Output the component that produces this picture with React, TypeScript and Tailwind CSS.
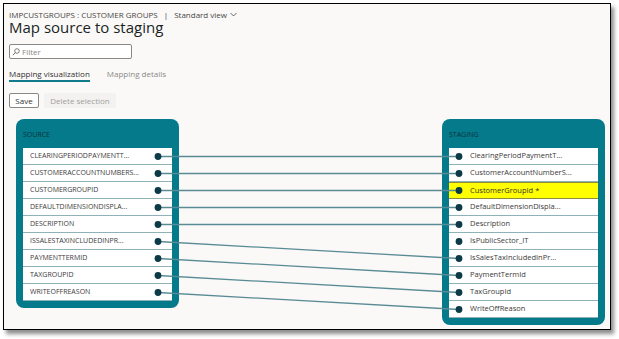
import React from "react";

const SRC = [
  "CLEARINGPERIODPAYMENTT...",
  "CUSTOMERACCOUNTNUMBERS...",
  "CUSTOMERGROUPID",
  "DEFAULTDIMENSIONDISPLA...",
  "DESCRIPTION",
  "ISSALESTAXINCLUDEDINPR...",
  "PAYMENTTERMID",
  "TAXGROUPID",
  "WRITEOFFREASON",
];
const STG = [
  "ClearingPeriodPaymentT...",
  "CustomerAccountNumberS...",
  "CustomerGroupId *",
  "DefaultDimensionDispla...",
  "Description",
  "IsPublicSector_IT",
  "IsSalesTaxIncludedInPr...",
  "PaymentTermId",
  "TaxGroupId",
  "WriteOffReason",
];
const MAP = [0, 1, 2, 3, 4, 6, 7, 8, 9];

const SX = 149;
const TX = 450;
const rowY = (i: number) => 37.5 + 17 * i;

export default function App() {
  return (
    <div className="w-[619px] h-[339px] bg-white overflow-hidden font-['Open_Sans',sans-serif]">
      <div className="ml-[3px] mt-[3px] w-[608px] h-[327px] border border-black bg-[#faf9f8] shadow-[3px_4px_4px_rgba(0,0,0,0.45)] px-[5px] flex flex-col">
        {/* breadcrumb */}
        <div className="mt-[6px] h-[9px] flex items-center text-[8px] leading-[9px] text-[#484644] whitespace-nowrap">
          <span>IMPCUSTGROUPS : CUSTOMER GROUPS</span>
          <span className="ml-[6px] text-[#323130]">|</span>
          <span className="ml-[6px]">Standard view</span>
          <svg width="7" height="5" viewBox="0 0 7 5" className="ml-[3px]">
            <path d="M0.5 1 L3.5 4 L6.5 1" fill="none" stroke="#484644" strokeWidth="0.8" />
          </svg>
        </div>
        {/* title */}
        <div className="h-[16px] text-[15px] leading-[16px] text-[#201f1e] whitespace-nowrap">
          Map source to staging
        </div>
        {/* filter */}
        <div className="mt-[9px] h-[15px] w-[123px] border border-[#8a8886] rounded-[2px] bg-white flex items-center pl-[2px]">
          <svg width="8" height="8" viewBox="0 0 8 8">
            <circle cx="5" cy="3" r="2.3" fill="none" stroke="#605e5c" strokeWidth="0.8" />
            <path d="M3.3 4.7 L0.8 7.2" stroke="#605e5c" strokeWidth="0.9" />
          </svg>
          <span className="ml-[2px] text-[8px] leading-[10px] text-[#8a8886]">Filter</span>
        </div>
        {/* tabs */}
        <div className="mt-[9px] flex text-[8px] leading-[11px] whitespace-nowrap">
          <div className="flex flex-col">
            <span className="h-[11px] text-[#323130]">Mapping visualization</span>
            <span className="mt-[1px] h-[2px] bg-[#0f7b8c]" />
          </div>
          <div className="ml-[17px] h-[11px] text-[#8a8886]">Mapping details</div>
        </div>
        {/* buttons */}
        <div className="mt-[11px] flex gap-[5px] text-[8px] leading-[10px]">
          <div className="h-[15px] w-[30px] border border-[#8a8886] rounded-[2px] bg-white flex items-center justify-center text-[#323130]">
            Save
          </div>
          <div className="h-[15px] w-[72px] rounded-[2px] bg-[#f3f2f1] flex items-center justify-center text-[#a19f9d]">
            Delete selection
          </div>
        </div>
        {/* diagram */}
        <div className="relative mt-[11px] flex justify-between items-start">
          <div className="ml-[7px] w-[163px] rounded-[8px] bg-[#047a8b] px-[7px] pb-[7px]">
            <div className="h-[29px] pt-[11px] text-[7px] leading-[10px] text-[#0a323a]">SOURCE</div>
            <div className="bg-white flex flex-col">
              {SRC.map((s, i) => (
                <div
                  key={i}
                  className="h-[17px] border-b border-[#8fb2b8] pl-[7px] flex items-center text-[7px] text-[#3b3a39] whitespace-nowrap"
                >
                  {s}
                </div>
              ))}
            </div>
          </div>
          <div className="w-[163px] rounded-[8px] bg-[#047a8b] px-[7px] pb-[7px]">
            <div className="h-[29px] pt-[11px] text-[7px] leading-[10px] text-[#0a323a]">STAGING</div>
            <div className="bg-white flex flex-col">
              {STG.map((s, i) => (
                <div
                  key={i}
                  className={`h-[17px] border-b pl-[21px] flex items-center text-[7.5px] whitespace-nowrap ${
                    i === 2
                      ? "bg-[#ffff00] border-[#8c8c3a] border-t text-[#323130]"
                      : "border-[#8fb2b8] text-[#3b3a39]"
                  }`}
                >
                  {s}
                </div>
              ))}
            </div>
          </div>
          <svg
            className="absolute left-0 top-0 pointer-events-none"
            width="596"
            height="210"
            viewBox="0 0 596 210"
          >
            {MAP.map((t, i) => (
              <line
                key={i}
                x1={SX}
                y1={rowY(i)}
                x2={TX}
                y2={rowY(t)}
                stroke="#5a8b95"
                strokeWidth="1.3"
              />
            ))}
            {SRC.map((_, i) => (
              <circle key={"s" + i} cx={SX} cy={rowY(i)} r="3.4" fill="#0d3a47" />
            ))}
            {STG.map((_, i) => (
              <circle key={"t" + i} cx={TX} cy={rowY(i)} r="3.4" fill="#0d3a47" />
            ))}
          </svg>
        </div>
      </div>
    </div>
  );
}
